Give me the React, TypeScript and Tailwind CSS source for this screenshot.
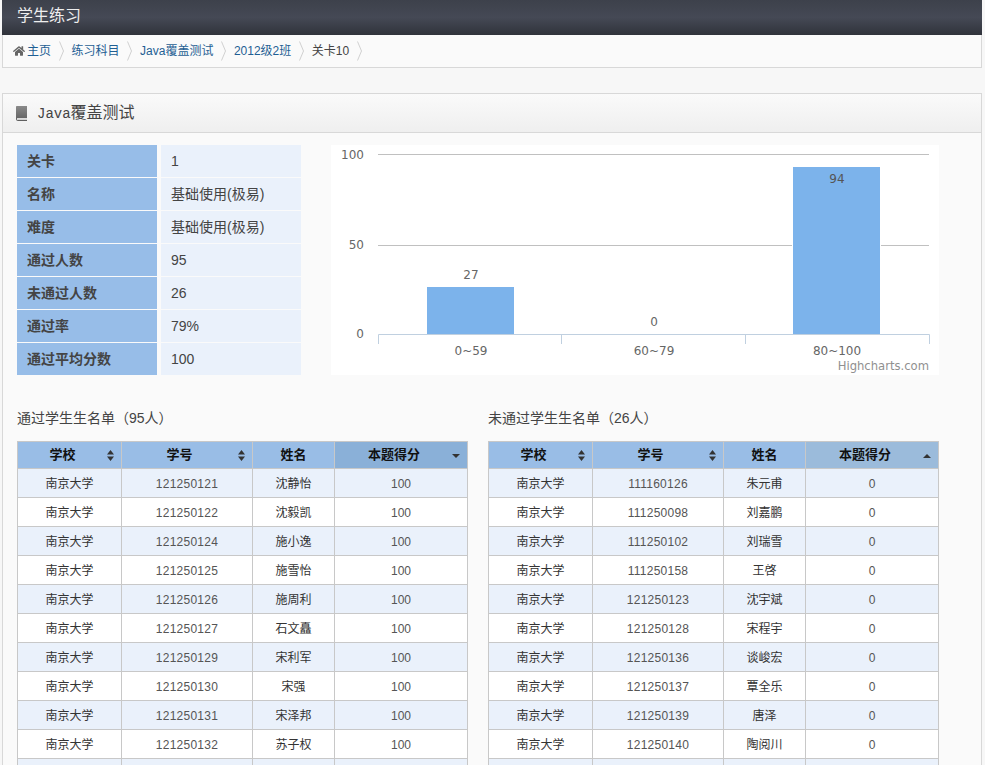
import { FaHome } from "react-icons/fa";

const sansFont = "font-['Liberation_Sans','Noto_Sans_CJK_SC',sans-serif]";

const crumbs = [
  { label: "主页", home: true },
  { label: "练习科目" },
  { label: "Java覆盖测试" },
  { label: "2012级2班" },
  { label: "关卡10", current: true },
];

const info = [
  ["关卡", "1"],
  ["名称", "基础使用(极易)"],
  ["难度", "基础使用(极易)"],
  ["通过人数", "95"],
  ["未通过人数", "26"],
  ["通过率", "79%"],
  ["通过平均分数", "100"],
];

const passed = [
  ["121250121", "沈静怡"],
  ["121250122", "沈毅凯"],
  ["121250124", "施小逸"],
  ["121250125", "施雪怡"],
  ["121250126", "施周利"],
  ["121250127", "石文矗"],
  ["121250129", "宋利军"],
  ["121250130", "宋强"],
  ["121250131", "宋泽邦"],
  ["121250132", "苏子权"],
];

const failed = [
  ["111160126", "朱元甫"],
  ["111250098", "刘嘉鹏"],
  ["111250102", "刘瑞雪"],
  ["111250158", "王啓"],
  ["121250123", "沈宇斌"],
  ["121250128", "宋程宇"],
  ["121250136", "谈峻宏"],
  ["121250137", "覃全乐"],
  ["121250139", "唐泽"],
  ["121250140", "陶阅川"],
];

function Chevron() {
  return (
    <svg width="5" height="20" viewBox="0 0 5 20" className="ml-[7.5px] mr-[8px] shrink-0">
      <polyline points="0.5,0.5 4.5,10 0.5,19.5" fill="none" stroke="#d0d0d0" strokeWidth="1" />
    </svg>
  );
}

function BookIcon() {
  return (
    <svg width="12" height="15" viewBox="0 0 12 15" className="shrink-0">
      <defs>
        <linearGradient id="book" x1="0" y1="0" x2="0" y2="1">
          <stop offset="0" stopColor="#8a8a8a" />
          <stop offset="1" stopColor="#5e5e5e" />
        </linearGradient>
      </defs>
      <path d="M1 0H11V12H2.2C1.5 12 1 12.4 1 13S1.5 14 2.2 14H11V15H2C0.9 15 0 14.2 0 13V1C0 0.4 0.4 0 1 0Z" fill="url(#book)" />
      <rect x="2" y="12.5" width="9" height="1.2" fill="#c4c4c4" />
    </svg>
  );
}

function SortBoth() {
  return (
    <svg width="7" height="11" viewBox="0 0 7 11" className="absolute right-[7px] top-[8px]">
      <path d="M3.5 0L7 4.5H0Z M3.5 11L0 6.5H7Z" fill="#333" />
    </svg>
  );
}

function SortOne({ up }: { up: boolean }) {
  return (
    <svg width="8" height="4" viewBox="0 0 8 4" className="absolute right-[7px] top-[12px]">
      <path d={up ? "M4 0L8 4H0Z" : "M0 0H8L4 4Z"} fill="#333" />
    </svg>
  );
}

function ScoreChart() {
  const labelClass = "fill-[#666666] text-[12px]";
  return (
    <svg width="608" height="230" viewBox="0 0 608 230" className="font-['DejaVu_Sans',sans-serif] bg-white block">
      <line x1="47" x2="598" y1="9.5" y2="9.5" stroke="#c0c0c0" />
      <line x1="47" x2="598" y1="100.5" y2="100.5" stroke="#c0c0c0" />
      <rect x="461" y="21" width="89" height="168" fill="#ffffff" />
      <rect x="96" y="142" width="87" height="47" fill="#7cb3eb" />
      <rect x="462" y="22" width="87" height="167" fill="#7cb3eb" />
      <path d="M47.5 189.5H598.5M47.5 189.5V199M230.5 189.5V199M414.5 189.5V199M598.5 189.5V199" fill="none" stroke="#c0d0e0" />
      <text x="33" y="14" textAnchor="end" className={labelClass}>100</text>
      <text x="33" y="104" textAnchor="end" className={labelClass}>50</text>
      <text x="33" y="193" textAnchor="end" className={labelClass}>0</text>
      <text x="140" y="134" textAnchor="middle" className={labelClass}>27</text>
      <text x="323" y="181" textAnchor="middle" className={labelClass}>0</text>
      <text x="506" y="38" textAnchor="middle" className="fill-[#555555] text-[12px]">94</text>
      <text x="140" y="210" textAnchor="middle" className={labelClass}>0~59</text>
      <text x="323" y="210" textAnchor="middle" className={labelClass}>60~79</text>
      <text x="506" y="210" textAnchor="middle" className={labelClass}>80~100</text>
      <text x="598" y="225" textAnchor="end" className="fill-[#909090] text-[11.6px]">Highcharts.com</text>
    </svg>
  );
}

function StudentTable({ rows, score, sortedBg, up }: { rows: string[][]; score: string; sortedBg: string; up: boolean }) {
  const thClass = "relative border border-[#c8c8c8] p-0 h-[27px] text-[13px] font-bold text-[#111111] text-center";
  const tdClass = "border border-[#c8c8c8] p-0 pt-px h-[29px] text-[12px] text-center";
  return (
    <table className="w-[450px] table-fixed border-collapse">
      <colgroup>
        <col className="w-[104px]" />
        <col className="w-[131px]" />
        <col className="w-[82px]" />
        <col className="w-[133px]" />
      </colgroup>
      <thead>
        <tr className="bg-[#99bde6]">
          <th className={thClass}>
            <span className="block pr-[14px]">学校</span>
            <SortBoth />
          </th>
          <th className={thClass}>
            <span className="block pr-[15px]">学号</span>
            <SortBoth />
          </th>
          <th className={thClass}>姓名</th>
          <th className={`${thClass} ${sortedBg}`}>
            <span className="block pr-[14px]">本题得分</span>
            <SortOne up={up} />
          </th>
        </tr>
      </thead>
      <tbody>
        {rows.map(([id, name], i) => (
          <tr key={id} className={i % 2 === 0 ? "bg-[#eaf1fb]" : "bg-white"}>
            <td className={`${tdClass} text-[#333333]`}>南京大学</td>
            <td className={`${tdClass} text-[#555555] tracking-[0.25px]`}>{id}</td>
            <td className={`${tdClass} text-[#333333]`}>{name}</td>
            <td className={`${tdClass} text-[#555555]`}>{score}</td>
          </tr>
        ))}
        {/* next row is cut off by the window */}
        <tr className="bg-[#eaf1fb]">
          <td className={tdClass} />
          <td className={tdClass} />
          <td className={tdClass} />
          <td className={tdClass} />
        </tr>
      </tbody>
    </table>
  );
}

export default function App() {
  return (
    <div className={`${sansFont} h-[765px] overflow-hidden bg-[#f7f7f7] px-[2px] pr-[3px] text-[#444444]`}>
      {/* Top bar */}
      <div className="flex h-[35px] items-center bg-gradient-to-b from-[#3d414b] via-[#454955] to-[#30333b] pb-[3px] pl-[15px] text-[16px] text-[#eeeeee]">
        学生练习
      </div>

      {/* Breadcrumb */}
      <div className="flex h-[33px] items-center border border-t-0 border-[#d8d8d8] bg-[#fafafa] pl-[10px] text-[12px]">
        {crumbs.map((c) => (
          <div key={c.label} className="flex items-center">
            {c.home && <FaHome className="mr-[2px] text-[#666666]" size={12} />}
            <span className={c.current ? "text-[#444444]" : "text-[#1f5f94]"}>{c.label}</span>
            <Chevron />
          </div>
        ))}
      </div>

      {/* Panel */}
      <div className="mt-[25px] border border-b-0 border-[#d8d8d8] bg-[#fafafa]">
        <div className="flex h-[39px] items-center gap-[9px] border-b border-[#d8d8d8] bg-gradient-to-b from-[#fafafa] to-[#efefef] pl-[13px] text-[16px] text-[#444444]">
          <BookIcon />
          <span>
            <span className="font-['Liberation_Mono',monospace] text-[14px]">Java</span>覆盖测试
          </span>
        </div>

        <div className="pl-[14px] pt-[12px]">
          <div className="flex items-start">
            <div className="grid w-[284px] grid-cols-[140px_140px] gap-x-[4px] gap-y-px text-[14px]">
              {info.map(([label, value]) => (
                <div key={label} className="contents">
                  <div className="flex h-[32px] items-center bg-[#97bde8] pl-[10px] font-bold text-[#444444]">{label}</div>
                  <div className="flex h-[32px] items-center bg-[#eaf1fb] pl-[10px] text-[#444444]">{value}</div>
                </div>
              ))}
            </div>
            <div className="ml-[30px]">
              <ScoreChart />
            </div>
          </div>

          <div className="mt-[33px] flex gap-[20px]">
            <div>
              <h3 className="mb-[13px] h-[20px] text-[14px] leading-[20px] font-normal text-[#444444]">通过学生生名单（95人）</h3>
              <StudentTable rows={passed} score="100" sortedBg="bg-[#8ab0d8]" up={false} />
            </div>
            <div>
              <h3 className="mb-[13px] h-[20px] text-[14px] leading-[20px] font-normal text-[#444444]">未通过学生生名单（26人）</h3>
              <StudentTable rows={failed} score="0" sortedBg="bg-[#9bbbdb]" up={true} />
            </div>
          </div>
        </div>
      </div>
    </div>
  );
}
